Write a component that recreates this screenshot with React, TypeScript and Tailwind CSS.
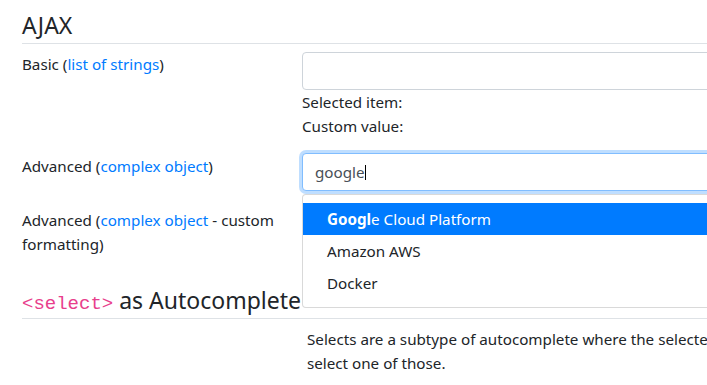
import React from "react";

function Link({ children }: { children: React.ReactNode }) {
  return <span className="text-[#007bff]">{children}</span>;
}

export default function App() {
  return (
    <div className="w-[707px] h-[385px] overflow-hidden bg-white pl-[22px] font-['Noto_Sans',sans-serif] text-[15.2px] leading-6 text-[#212529]">
      {/* AJAX heading */}
      <div className="pt-[11px] pb-[3px] text-[23px] leading-[29px] border-b border-[#dee2e6]">AJAX</div>

      {/* Row 1 */}
      <div className="mt-2 flex">
        <div className="w-[280px] shrink-0 pr-[22px]">
          Basic (<Link>list of strings</Link>)
        </div>
        <div className="w-[600px] shrink-0">
          <div className="h-[38px] border border-[#ced4da] rounded-[4px] bg-white" />
          <div>Selected item:</div>
          <div>Custom value:</div>
        </div>
      </div>

      {/* Row 2 */}
      <div className="mt-[15px] flex relative z-10">
        <div className="w-[280px] shrink-0 pr-[22px] pt-px">
          Advanced (<Link>complex object</Link>)
        </div>
        <div className="w-[600px] shrink-0 relative">
          <div className="h-[38px] border border-[#80bdff] rounded-[4px] bg-white shadow-[0_0_0_3px_rgba(0,123,255,0.25)] px-3 flex items-center">
            <span className="text-[#495057]">google</span>
            <span className="inline-block w-px h-[15px] bg-black" />
          </div>
          <div className="absolute left-0 top-[41px] w-[600px] bg-white border border-[rgba(0,0,0,0.15)] rounded-[4px] py-2">
            <div className="h-8 leading-8 px-6 bg-[#007bff] text-white">
              <span className="font-bold">Googl</span>e Cloud Platform
            </div>
            <div className="h-8 leading-8 px-6">Amazon AWS</div>
            <div className="h-8 leading-8 px-6">Docker</div>
          </div>
        </div>
      </div>

      {/* Row 3 */}
      <div className="mt-4 flex">
        <div className="w-[280px] shrink-0 pr-[22px] pt-px">
          Advanced (<Link>complex object</Link> - custom formatting)
        </div>
        <div className="w-[600px] shrink-0">
          <div className="h-[38px] border border-[#ced4da] rounded-[4px] bg-white" />
        </div>
      </div>

      {/* select heading */}
      <div className="mt-[30px] pb-[3px] text-[23px] leading-[29px] border-b border-[#dee2e6] whitespace-nowrap">
        <code className="font-['Liberation_Mono',monospace] text-[19px] leading-none text-[#e83e8c]">&lt;select&gt;</code> as
        Autocomplete
      </div>

      <p className="mt-2 ml-[285px] w-[900px]">
        Selects are a subtype of autocomplete where the selected value must be one of the given options, so users
        have to
        <br />
        select one of those.
      </p>
    </div>
  );
}
